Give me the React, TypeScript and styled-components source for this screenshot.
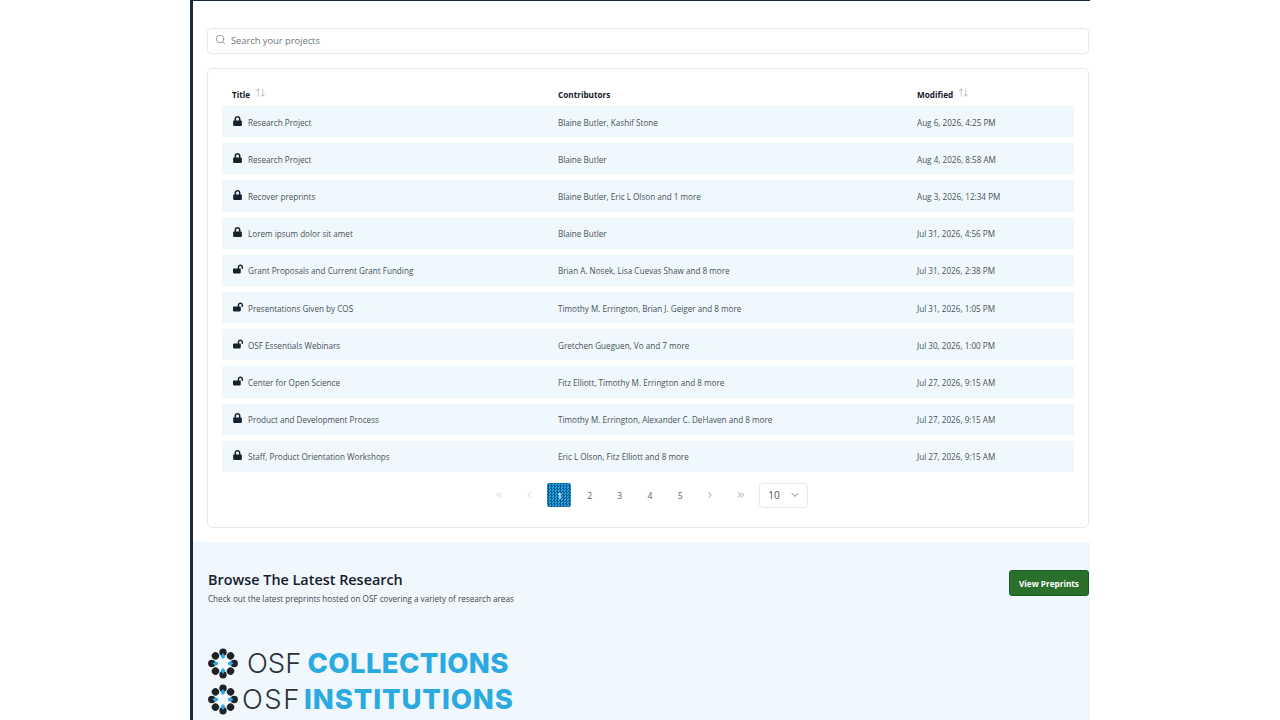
import React from 'react'
import styled, { createGlobalStyle } from 'styled-components'
import { ArrowUpDown, ChevronDown, ChevronLeft, ChevronRight, ChevronsLeft, ChevronsRight, Search } from 'lucide-react'
import { FaLock, FaLockOpen } from 'react-icons/fa'

const GlobalStyle = createGlobalStyle`
  html, body {
    margin: 0;
    padding: 0;
    height: 720px;
    overflow: hidden;
    background: #fff;
    font-family: "Open Sans", "Liberation Sans", sans-serif;
  }
`

const Stage = styled.div`
  width: 1280px;
  height: 720px;
  padding-left: 190px;
  box-sizing: border-box;
`
const Frame = styled.div`
  width: 900px;
  height: 720px;
  box-sizing: border-box;
  padding: 1px 0 0 3px;
  background: linear-gradient(#1b2b3a, #1b2b3a) left top / 3px 100% no-repeat,
    linear-gradient(#1b2b3a, #1b2b3a) left top / 100% 1px no-repeat;
`
const Page = styled.main`
  height: 719px;
  overflow: hidden;
  background: #fff;
  border-top-left-radius: 5px;
`
const Content = styled.div`
  padding: 27px 1px 14px 14px;
  display: flex;
  flex-direction: column;
  gap: 14px;
`
const SearchBox = styled.div`
  height: 26px;
  box-sizing: border-box;
  display: flex;
  align-items: center;
  gap: 5px;
  padding: 0 7px 1px;
  border: 1px solid #e4e7ea;
  border-radius: 4px;
  color: #6d7680;
  font-size: 9.3px;
  svg { margin-top: -3px; }
`
const Panel = styled.section`
  height: 460px;
  box-sizing: border-box;
  padding: 18px 14px 0;
  border: 1px solid #e6e9ec;
  border-radius: 5px;
`
const Columns = styled.div`
  display: grid;
  grid-template-columns: 326px 359px 1fr;
  align-items: center;
  padding-left: 10px;
`
const HeadRow = styled(Columns)`
  height: 19px;
  box-sizing: border-box;
  padding-bottom: 4px;
  font-size: 8.2px;
  font-weight: 700;
  color: #15202b;
`
const HeadCell = styled.div`
  display: flex;
  align-items: center;
  gap: 5px;
  svg { margin-top: -4px; color: #7b858e; }
`
const Rows = styled.div`
  display: flex;
  flex-direction: column;
  gap: 6px;
`
const Row = styled(Columns)`
  height: 31.2px;
  box-sizing: border-box;
  padding-top: 1px;
  background: #eff8fd;
  font-size: 8.15px;
  color: #47525c;
`
const TitleCell = styled.div<{ $open: boolean }>`
  display: flex;
  align-items: center;
  padding-left: 1px;
  gap: ${p => (p.$open ? 5 : 6)}px;
  svg {
    width: ${p => (p.$open ? 10 : 9)}px;
    height: 10px;
    margin-top: -3px;
    color: #16222e;
    flex: none;
  }
`
const Pager = styled.nav`
  display: flex;
  align-items: center;
  height: 25px;
  margin-top: 11px;
  padding-left: 265px;
`
const PageButton = styled.div<{ $active?: boolean; $faded?: boolean }>`
  width: 24px;
  height: 24px;
  margin-right: 6.2px;
  display: flex;
  align-items: center;
  justify-content: center;
  border-radius: 2px;
  font-size: 8.5px;
  color: ${p => (p.$active ? '#cfeefc' : p.$faded ? '#b3bac1' : '#59636d')};
  background: ${p => p.$active ? 'repeating-conic-gradient(#0d5f98 0 25%, #27a3dc 0 50%) 0 0 / 3px 3px' : 'none'};
  font-weight: ${p => (p.$active ? 700 : 400)};
`
const SizeSelect = styled.div`
  width: 49px;
  height: 25px;
  box-sizing: border-box;
  margin-left: 0.5px;
  padding: 0 6px 0 8px;
  display: flex;
  align-items: center;
  justify-content: space-between;
  border: 1px solid #e4e7ea;
  border-radius: 4px;
  font-size: 10px;
  color: #47525c;
`
const Browse = styled.section`
  height: 178px;
  box-sizing: border-box;
  background: #f0f7fd;
  padding: 28px 2px 0 15px;
`
const BrowseTop = styled.div`
  display: flex;
  justify-content: space-between;
  align-items: flex-start;
`
const BrowseHeading = styled.h2`
  margin: 0 0 3px;
  font-size: 14.4px;
  line-height: 20px;
  font-weight: 600;
  color: #15202b;
`
const BrowseText = styled.p`
  margin: 0;
  font-size: 8.15px;
  line-height: 12px;
  color: #3d4852;
`
const GreenButton = styled.button`
  width: 80px;
  height: 26px;
  margin-right: -1px;
  padding: 0;
  border: 1px solid #1d5c20;
  border-radius: 3px;
  background: #2a6f2c;
  color: #fff;
  font: 700 8.2px "Open Sans", sans-serif;
`
const Logos = styled.div`
  margin-top: 43px;
  display: flex;
  flex-direction: column;
  gap: 5px;
`
const LogoLine = styled.div`
  display: flex;
  align-items: center;
  height: 31px;
  font-family: Inter, "Liberation Sans", sans-serif;
  font-size: 27.5px;
  line-height: 31px;
  white-space: nowrap;
`
const LogoLight = styled.span<{ $left: number; $right: number; $spacing: number }>`
  font-weight: 300;
  color: #2c3338;
  margin: 0 ${p => p.$right}px 0 ${p => p.$left}px;
  letter-spacing: ${p => p.$spacing}px;
`
const LogoBold = styled.span<{ $spacing: number }>`
  font-weight: 800;
  color: #2ba9e1;
  letter-spacing: ${p => p.$spacing}px;
`

const petals = [0, 45, 90, 135, 180, 225, 270, 315]

const Flower = () => (
  <svg width="30" height="31" viewBox="0 0 32 32" aria-hidden="true">
    {petals.map(angle => (
      <g key={angle} transform={`rotate(${angle} 16 16)`}>
        <circle cx="16" cy={angle % 90 === 0 ? 4 : 4.6} r="3.9" fill="#1d2227" />
        {angle % 90 === 0 && <path d="M13.6 8 L16 4.8 L18.4 8 L17 10.6 H15 Z" fill="#2ba9e1" />}
      </g>
    ))}
  </svg>
)

const projects = [
  { title: 'Research Project', people: 'Blaine Butler, Kashif Stone', date: 'Aug 6, 2026, 4:25 PM', open: false },
  { title: 'Research Project', people: 'Blaine Butler', date: 'Aug 4, 2026, 8:58 AM', open: false },
  { title: 'Recover preprints', people: 'Blaine Butler, Eric L Olson and 1 more', date: 'Aug 3, 2026, 12:34 PM', open: false },
  { title: 'Lorem ipsum dolor sit amet', people: 'Blaine Butler', date: 'Jul 31, 2026, 4:56 PM', open: false },
  { title: 'Grant Proposals and Current Grant Funding', people: 'Brian A. Nosek, Lisa Cuevas Shaw and 8 more', date: 'Jul 31, 2026, 2:38 PM', open: true },
  { title: 'Presentations Given by COS', people: 'Timothy M. Errington, Brian J. Geiger and 8 more', date: 'Jul 31, 2026, 1:05 PM', open: true },
  { title: 'OSF Essentials Webinars', people: 'Gretchen Gueguen, Vo and 7 more', date: 'Jul 30, 2026, 1:00 PM', open: true },
  { title: 'Center for Open Science', people: 'Fitz Elliott, Timothy M. Errington and 8 more', date: 'Jul 27, 2026, 9:15 AM', open: true },
  { title: 'Product and Development Process', people: 'Timothy M. Errington, Alexander C. DeHaven and 8 more', date: 'Jul 27, 2026, 9:15 AM', open: false },
  { title: 'Staff, Product Orientation Workshops', people: 'Eric L Olson, Fitz Elliott and 8 more', date: 'Jul 27, 2026, 9:15 AM', open: false },
]

export default function App() {
  return (
    <Stage>
      <GlobalStyle />
      <Frame>
        <Page>
          <Content>
            <SearchBox>
              <Search size={11} strokeWidth={1.5} />
              <span>Search your projects</span>
            </SearchBox>
            <Panel>
              <HeadRow>
                <HeadCell>Title <ArrowUpDown size={11} strokeWidth={1} /></HeadCell>
                <HeadCell>Contributors</HeadCell>
                <HeadCell>Modified <ArrowUpDown size={11} strokeWidth={1} /></HeadCell>
              </HeadRow>
              <Rows>
                {projects.map((p, i) => (
                  <Row key={i}>
                    <TitleCell $open={p.open}>
                      {p.open ? <FaLockOpen /> : <FaLock />}
                      <span>{p.title}</span>
                    </TitleCell>
                    <div>{p.people}</div>
                    <div>{p.date}</div>
                  </Row>
                ))}
              </Rows>
              <Pager>
                <PageButton $faded><ChevronsLeft size={10} strokeWidth={1.5} /></PageButton>
                <PageButton $faded><ChevronLeft size={10} strokeWidth={1.5} /></PageButton>
                <PageButton $active>1</PageButton>
                <PageButton>2</PageButton>
                <PageButton>3</PageButton>
                <PageButton>4</PageButton>
                <PageButton>5</PageButton>
                <PageButton><ChevronRight size={10} strokeWidth={1.5} /></PageButton>
                <PageButton><ChevronsRight size={10} strokeWidth={1.5} /></PageButton>
                <SizeSelect>10 <ChevronDown size={12} strokeWidth={1.5} /></SizeSelect>
              </Pager>
            </Panel>
          </Content>
          <Browse>
            <BrowseTop>
              <div>
                <BrowseHeading>Browse The Latest Research</BrowseHeading>
                <BrowseText>Check out the latest preprints hosted on OSF covering a variety of research areas</BrowseText>
              </div>
              <GreenButton>View Preprints</GreenButton>
            </BrowseTop>
            <Logos>
              <LogoLine>
                <Flower />
                <LogoLight $left={9} $right={6} $spacing={0}>OSF</LogoLight>
                <LogoBold $spacing={0.4}>COLLECTIONS</LogoBold>
              </LogoLine>
              <LogoLine>
                <Flower />
                <LogoLight $left={4} $right={3} $spacing={1.5}>OSF</LogoLight>
                <LogoBold $spacing={0.9}>INSTITUTIONS</LogoBold>
              </LogoLine>
            </Logos>
          </Browse>
        </Page>
      </Frame>
    </Stage>
  )
}
